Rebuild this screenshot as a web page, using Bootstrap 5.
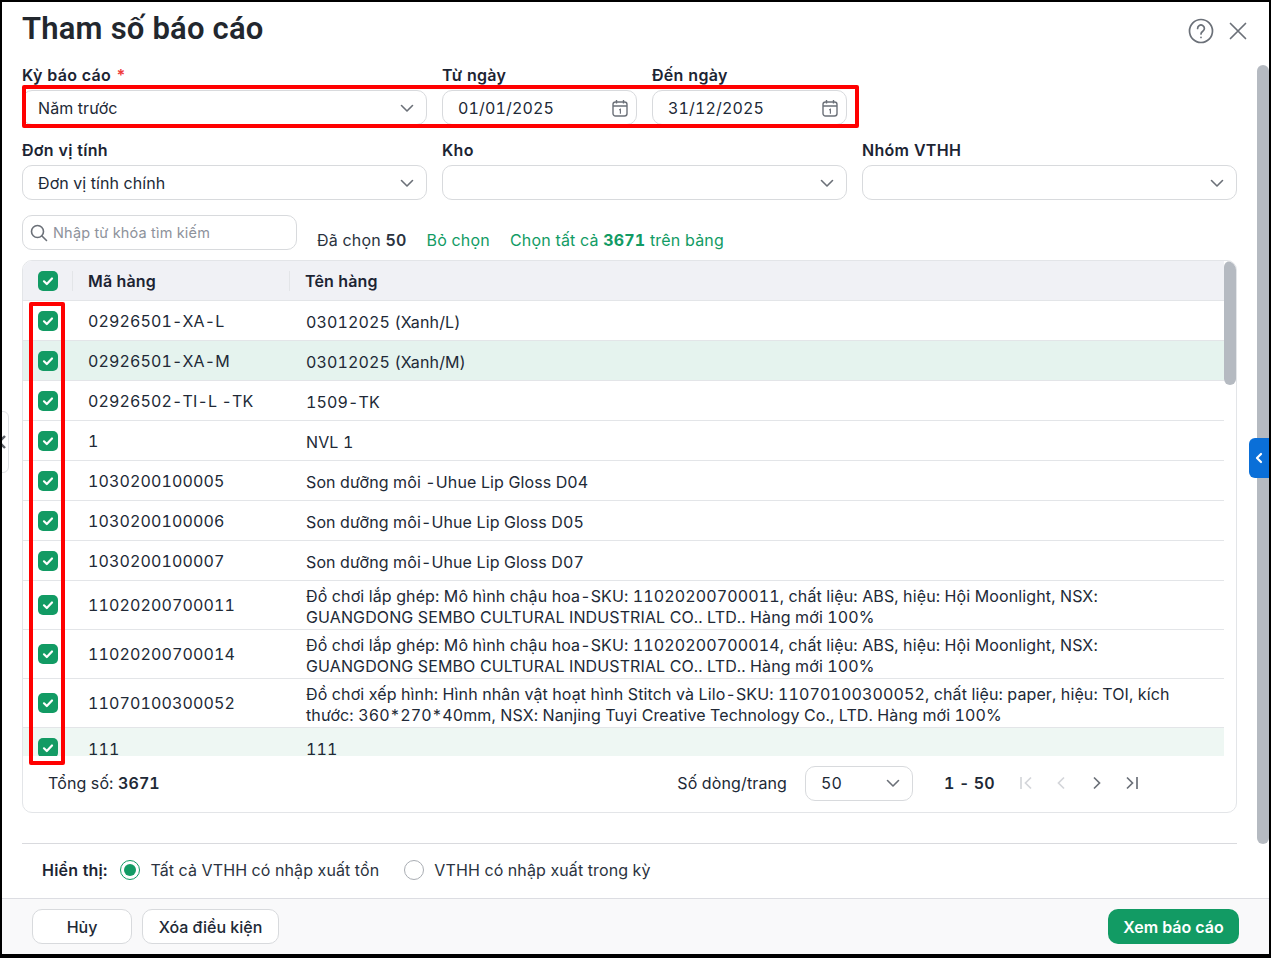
<!DOCTYPE html>
<html lang="vi">
<head>
  <meta charset="UTF-8">
  <meta name="viewport" content="width=device-width, initial-scale=1.0">
  <title>Tham số báo cáo</title>
  <link href="https://cdn.jsdelivr.net/npm/bootstrap@5.3.0/dist/css/bootstrap.min.css" rel="stylesheet">
  <style>
    html, body { height: 100%; overflow: hidden; }
    body { font-family: Inter, "Liberation Sans", sans-serif; font-size: 16px; color: #212936; background: #fff; letter-spacing: .12px; font-variant-numeric: tabular-nums; }
    .frame { position: relative; height: 958px; border: solid #000; border-width: 2px 2px 4px 2px; overflow: hidden; display: flex; flex-direction: column; }
    .dlg-head { height: 63px; padding: 8px 21px 0 20px; flex: none; }
    .dlg-title { font-family: Roboto, sans-serif; font-size: 31px; font-weight: 600; line-height: 38px; margin: 0; color: #22272e; letter-spacing: .2px; }
    .dlg-body { flex: 1; padding: 0 32px 0 20px; min-height: 0; }
    .fld-label { font-weight: 600; line-height: 20px; height: 25px; color: #1c2433; margin: 0; display: block; letter-spacing: .3px; }
    .req { color: #ef3b3b; }
    .fld { height: 35px; border: 1px solid #d8dadd; border-radius: 10px; font-size: 16px; color: #212936; padding: 0 15px; box-shadow: none; letter-spacing: .1px; font-variant-numeric: tabular-nums; }
    .fld-date { letter-spacing: .15px; }
    .form-select.fld { padding: 0 30px 0 15px; background-image: url("data:image/svg+xml,%3csvg xmlns='http://www.w3.org/2000/svg' viewBox='0 0 14 14'%3e%3cpath fill='none' stroke='%236b7078' stroke-width='1.6' stroke-linecap='round' stroke-linejoin='round' d='M1.5 4.5L7 10l5.5-5.5'/%3e%3c/svg%3e"); background-position: right 12px center; background-size: 14px 14px; }
    .w-wide { width: 405px; }
    .w-date { width: 195px; }
    .w-last { width: 375px; }
    .gap-15 { gap: 15px; }
    .gap-20 { gap: 20px; }
    .form-row-a { height: 75px; }
    .search-box { width: 275px; height: 35px; margin-top: 15px; }
    .search-box input { height: 35px; padding-left: 30px; font-size: 14.5px; letter-spacing: .2px; }
    .search-box input::placeholder { color: #8d929b; }
    .fld-icon { position: absolute; top: 50%; transform: translateY(-50%); pointer-events: none; }
    .sel-info { margin: 30px 0 0 20px; line-height: 20px; color: #2b3340; height: 20px; letter-spacing: .2px; }
    .link-g { color: #129b64; }
    .tbl-card { margin-top: 10px; height: 553px; border: 1px solid #e3e5e8; border-radius: 10px; position: relative; overflow: hidden; background: #fff; }
    .tbl-scroll { height: 495px; width: 1201px; overflow: hidden; }
    .tbl-scroll .table { margin: 0; table-layout: fixed; width: 1201px; color: #212936; }
    .tbl-scroll th { background: #f0f1f5; height: 39px; font-weight: 600; padding: 2px 0 0 15px; vertical-align: middle; border-bottom: 1px solid #e3e5e8; position: relative; color: #1c2433; }
    .tbl-scroll td { height: 40px; padding: 2px 0 0 15px; vertical-align: middle; border-bottom: 1px solid #e3e5e8; background: transparent; box-shadow: none; color: #212936; }
    .tbl-scroll td.code { letter-spacing: .13px; }
    .tbl-scroll td.nm { line-height: 21px; padding: 4px 20px 0 16px; }
    .tbl-scroll tr.tall td { height: 49px; }
    .tbl-scroll tr.tall td.code, .tbl-scroll tr.tall td.chk-cell { padding-top: 0; }
    .tbl-scroll tr.hl td { background: #e5f3ee; }
    .tbl-scroll tr.hl2 td { background: #eef7f3; border: 0; }
    .tbl-scroll tr.hl2 td.code { padding-top: 4px; }
    .tbl-scroll th.sep::after { content: ""; position: absolute; right: 0; top: 10px; height: 20px; width: 1px; background: #e3e5e8; }
    .chk-cell { padding: 2px 0 0 0; text-align: center; }
    .tbl-scroll th.chk-cell, .tbl-scroll td.chk-cell { padding-left: 0; }
    .tbl-scroll .form-check-input { width: 20px; height: 20px; margin: 0 0 0 15px; border: 0; border-radius: 5px; background-color: #129b64; background-image: url("data:image/svg+xml,%3csvg xmlns='http://www.w3.org/2000/svg' viewBox='0 0 20 20'%3e%3cpath fill='none' stroke='%23fff' stroke-width='2.2' stroke-linecap='round' stroke-linejoin='round' d='M6 10.3l2.8 2.7L14 7.5'/%3e%3c/svg%3e"); background-size: 20px; display: block; }
    .tbl-thumb { position: absolute; right: 0; top: 0; width: 12px; height: 124px; border-radius: 6px; background: #b5bac1; }
    .tbl-foot { height: 57px; padding: 0 96px 0 25px; }
    .tbl-foot .total { margin-top: -4px; }
    .tbl-foot .pg-wrap { margin-top: -3px; }
    .page-sel { width: 108px; margin-left: 18px; }
    .page-range { width: 50px; margin-left: 31px; font-weight: 600; white-space: nowrap; }
    .pager { margin-left: 24px; width: 122px; }
    .show-row { margin-top: 30px; border-top: 1px solid #d9dade; height: 55px; padding: 0 0 2px 20px; }
    .show-row .lbl { font-weight: 600; margin-right: 13px; color: #1c2433; letter-spacing: .2px; }
    .show-row .form-check-input { width: 20px; height: 20px; margin: 0 10px 0 0; border: 1px solid #a9adb3; background-image: none; }
    .show-row .form-check-input:checked { background-color: #fff; border-color: #129b64; background-image: url("data:image/svg+xml,%3csvg xmlns='http://www.w3.org/2000/svg' viewBox='0 0 20 20'%3e%3ccircle cx='10' cy='10' r='6' fill='%23129b64'/%3e%3c/svg%3e"); background-size: 20px; }
    .show-row label { color: #2b3340; }
    .dlg-foot { flex: none; height: 56px; background: #f9f9fa; border-top: 1px solid #dcdde2; padding: 10px 30px 0 30px; }
    .btn-plain { height: 35px; border: 1px solid #d8dadd; border-radius: 10px; background: #fff; color: #212936; font-size: 16px; font-weight: 500; padding: 0; }
    .btn-view { height: 35px; width: 131px; border: 0; border-radius: 10px; background: #129b64; color: #fff; font-weight: 600; font-size: 16px; padding: 0; }
    .main-thumb { position: absolute; right: 0; top: 63px; width: 12px; height: 779px; border-radius: 6px; background: #b5bac1; }
    .tab-left { position: absolute; left: -10px; top: 409px; width: 17px; height: 62px; background: #fff; border: 1px solid #dfe1e4; border-radius: 0 6px 6px 0; display: flex; align-items: center; justify-content: flex-end; padding-right: 1px; }
    .tab-right { position: absolute; right: 0; top: 436px; width: 20px; height: 40px; background: #0a6fd8; border-radius: 6px 0 0 6px; display: flex; align-items: center; justify-content: center; }
    .mark-red { position: absolute; border: 4px solid #f00; border-radius: 2px; pointer-events: none; }
    .mark-a { left: 20px; top: 83px; width: 837px; height: 43px; }
    .mark-b { left: 27px; top: 300px; width: 36px; height: 463px; }
  </style>
</head>
<body>
  <div class="frame">
    <div class="dlg-head d-flex justify-content-between align-items-start">
      <h1 class="dlg-title">Tham số báo cáo</h1>
      <div class="d-flex align-items-center" style="margin-top:8px;gap:14px">
        <svg width="26" height="26" viewBox="0 0 26 26" fill="none" stroke="#6b7078" stroke-width="1.7" stroke-linecap="round"><circle cx="13" cy="13" r="11.5"/><path d="M9.6 10.4a3.4 3.4 0 1 1 5.2 2.9c-1.2.8-1.8 1.4-1.8 2.7"/><path d="M13 19.3v.2"/></svg>
        <svg width="20" height="20" viewBox="0 0 20 20" fill="none" stroke="#6b7078" stroke-width="1.7" stroke-linecap="round"><path d="M2.5 2.5l15 15M17.5 2.5l-15 15"/></svg>
      </div>
    </div>

    <div class="dlg-body">
      <div class="d-flex gap-15 form-row-a">
        <div class="w-wide">
          <label class="fld-label">Kỳ báo cáo <span class="req">*</span></label>
          <select class="form-select fld"><option>Năm trước</option></select>
        </div>
        <div class="w-date">
          <label class="fld-label">Từ ngày</label>
          <div class="position-relative">
            <input class="form-control fld fld-date" value="01/01/2025">
            <svg class="fld-icon" style="right:9px" width="16" height="18" viewBox="0 0 16 18" fill="none" stroke="#6b7078" stroke-width="1.4"><rect x="1" y="3" width="14" height="14" rx="2.5"/><path d="M1 7h14M4.5 1v3.5M11.5 1v3.5"/><path d="M7.2 11l1.2-.8v4.6" stroke-width="1.1"/></svg>
          </div>
        </div>
        <div class="w-date">
          <label class="fld-label">Đến ngày</label>
          <div class="position-relative">
            <input class="form-control fld fld-date" value="31/12/2025">
            <svg class="fld-icon" style="right:9px" width="16" height="18" viewBox="0 0 16 18" fill="none" stroke="#6b7078" stroke-width="1.4"><rect x="1" y="3" width="14" height="14" rx="2.5"/><path d="M1 7h14M4.5 1v3.5M11.5 1v3.5"/><path d="M7.2 11l1.2-.8v4.6" stroke-width="1.1"/></svg>
          </div>
        </div>
      </div>

      <div class="d-flex gap-15">
        <div class="w-wide">
          <label class="fld-label">Đơn vị tính</label>
          <select class="form-select fld"><option>Đơn vị tính chính</option></select>
        </div>
        <div class="w-wide">
          <label class="fld-label">Kho</label>
          <select class="form-select fld"><option></option></select>
        </div>
        <div class="w-last">
          <label class="fld-label">Nhóm VTHH</label>
          <select class="form-select fld"><option></option></select>
        </div>
      </div>

      <div class="d-flex align-items-start">
        <div class="search-box position-relative">
          <input class="form-control fld" placeholder="Nhập từ khóa tìm kiếm">
          <svg class="fld-icon" style="left:8px" width="18" height="18" viewBox="0 0 18 18" fill="none" stroke="#6b7078" stroke-width="1.6" stroke-linecap="round"><circle cx="7.5" cy="7.5" r="6"/><path d="M12 12l4.5 4.5"/></svg>
        </div>
        <div class="sel-info d-flex gap-20">
          <span>Đã chọn <b class="fw-semibold">50</b></span>
          <a class="link-g text-decoration-none" href="#">Bỏ chọn</a>
          <a class="link-g text-decoration-none" href="#">Chọn tất cả <b>3671</b> trên bảng</a>
        </div>
      </div>

      <div class="tbl-card">
        <div class="tbl-scroll">
          <table class="table">
            <colgroup><col style="width:50px"><col style="width:217px"><col></colgroup>
            <thead>
              <tr>
                <th class="chk-cell sep"><input class="form-check-input" type="checkbox" checked></th>
                <th class="sep">Mã hàng</th>
                <th>Tên hàng</th>
              </tr>
            </thead>
            <tbody id="rows"></tbody>
          </table>
        </div>
        <div class="tbl-thumb"></div>
        <div class="tbl-foot d-flex align-items-center">
          <div class="total">Tổng số: <b class="fw-semibold">3671</b></div>
          <div class="ms-auto d-flex align-items-center pg-wrap">
            <span>Số dòng/trang</span>
            <select class="form-select fld page-sel"><option>50</option></select>
            <span class="page-range">1 - 50</span>
            <div class="pager d-flex justify-content-between align-items-center">
              <svg width="16" height="16" viewBox="0 0 16 16" fill="none" stroke="#d4d6da" stroke-width="1.7"><path d="M3 2v12M13 2.5L7.5 8l5.5 5.5"/></svg>
              <svg width="16" height="16" viewBox="0 0 16 16" fill="none" stroke="#d4d6da" stroke-width="1.7"><path d="M11 2.5L5.5 8l5.5 5.5"/></svg>
              <svg width="16" height="16" viewBox="0 0 16 16" fill="none" stroke="#6b7078" stroke-width="1.7"><path d="M5 2.5L10.5 8 5 13.5"/></svg>
              <svg width="16" height="16" viewBox="0 0 16 16" fill="none" stroke="#6b7078" stroke-width="1.7"><path d="M13 2v12M3 2.5L8.5 8 3 13.5"/></svg>
            </div>
          </div>
        </div>
      </div>

      <div class="show-row d-flex align-items-center">
        <span class="lbl">Hiển thị:</span>
        <input class="form-check-input" type="radio" name="showMode" id="r1" checked>
        <label for="r1" style="margin-right:25px">Tất cả VTHH có nhập xuất tồn</label>
        <input class="form-check-input" type="radio" name="showMode" id="r2">
        <label for="r2">VTHH có nhập xuất trong kỳ</label>
      </div>
    </div>

    <div class="dlg-foot d-flex">
      <button class="btn btn-plain" style="width:100px">Hủy</button>
      <button class="btn btn-plain" style="width:137px;margin-left:10px">Xóa điều kiện</button>
      <button class="btn btn-view ms-auto">Xem báo cáo</button>
    </div>

    <div class="main-thumb"></div>
    <div class="tab-left"><svg width="10" height="16" viewBox="0 0 10 16" fill="none" stroke="#5c6067" stroke-width="2.4"><path d="M8 2L2 8l6 6"/></svg></div>
    <div class="tab-right"><svg width="8" height="12" viewBox="0 0 8 12" fill="none" stroke="#fff" stroke-width="2.2" stroke-linecap="round" stroke-linejoin="round"><path d="M6 2L2 6l4 4"/></svg></div>
    <div class="mark-red mark-a"></div>
    <div class="mark-red mark-b"></div>
  </div>

  <script>
    const rows = [
      ['02926501-XA-L', '03012025 (Xanh/L)'],
      ['02926501-XA-M', '03012025 (Xanh/M)', 'hl'],
      ['02926502-TI-L -TK', '1509-TK'],
      ['1', 'NVL 1'],
      ['1030200100005', 'Son dưỡng môi -Uhue Lip Gloss D04'],
      ['1030200100006', 'Son dưỡng môi-Uhue Lip Gloss D05'],
      ['1030200100007', 'Son dưỡng môi-Uhue Lip Gloss D07'],
      ['11020200700011', 'Đồ chơi lắp ghép: Mô hình chậu hoa-SKU: 11020200700011, chất liệu: ABS, hiệu: Hội Moonlight, NSX: GUANGDONG SEMBO CULTURAL INDUSTRIAL CO.. LTD.. Hàng mới 100%', 'tall'],
      ['11020200700014', 'Đồ chơi lắp ghép: Mô hình chậu hoa-SKU: 11020200700014, chất liệu: ABS, hiệu: Hội Moonlight, NSX: GUANGDONG SEMBO CULTURAL INDUSTRIAL CO.. LTD.. Hàng mới 100%', 'tall'],
      ['11070100300052', 'Đồ chơi xếp hình: Hình nhân vật hoạt hình Stitch và Lilo-SKU: 11070100300052, chất liệu: paper, hiệu: TOI, kích thước: 360*270*40mm, NSX: Nanjing Tuyi Creative Technology Co., LTD. Hàng mới 100%', 'tall'],
      ['111', '111', 'hl2']
    ];
    const tbody = document.getElementById('rows');
    rows.forEach(r => {
      const tr = document.createElement('tr');
      tr.className = r[2] || '';
      tr.innerHTML = `
        <td class="chk-cell"><input class="form-check-input" type="checkbox" checked></td>
        <td class="code">${r[0]}</td>
        <td class="nm">${r[1]}</td>`;
      tbody.appendChild(tr);
    });
  </script>
  <script src="https://cdn.jsdelivr.net/npm/bootstrap@5.3.0/dist/js/bootstrap.bundle.min.js"></script>
</body>
</html>
